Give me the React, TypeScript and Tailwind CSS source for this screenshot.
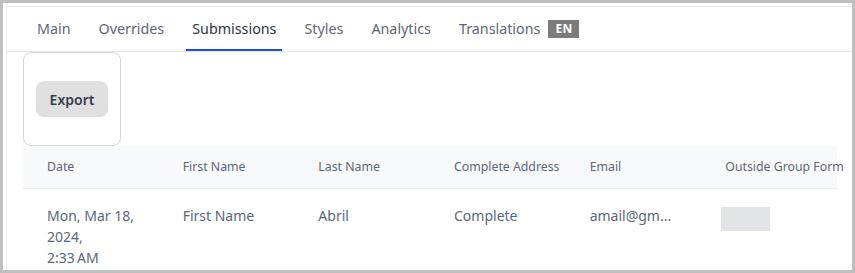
const tabs = ['Main', 'Overrides', 'Submissions', 'Styles', 'Analytics', 'Translations'];

const columns = ['Date', 'First Name', 'Last Name', 'Complete Address', 'Email', 'Outside Group Form'];

function Tab({ label, active }: { label: string; active: boolean }) {
  return (
    <div className="relative flex h-full items-center px-[14px]">
      <span className={active ? 'text-[14.3px] text-[#2c3445]' : 'text-[14.3px] text-[#5d6679]'}>{label}</span>
      {label === 'Translations' && (
        <span className="ml-2 bg-[#7b7b7b] px-[7px] py-px text-[12px] font-bold leading-4 tracking-wide text-white">
          EN
        </span>
      )}
      {active && <div className="absolute bottom-0 left-2 right-2 h-[2px] bg-[#1f4fd8]" />}
    </div>
  );
}

export default function App() {
  return (
    <div
      className="h-[273px] w-[855px] overflow-hidden bg-[#bfbfbf] pl-[3px] pr-[3px] pt-[3px]"
      style={{ fontFamily: '"Noto Sans", "Open Sans", sans-serif' }}
    >
      <div className="h-[267px] overflow-hidden bg-white pl-[3px] pt-[3px]">
        <div className="h-full border-l border-t border-[#ebebeb]">
          {/* Tabs */}
          <div className="flex h-[45px] items-stretch border-b border-[#e6e6e8] pl-4">
            {tabs.map((t) => (
              <Tab key={t} label={t} active={t === 'Submissions'} />
            ))}
          </div>

          <div className="pl-4">
            {/* Export card */}
            <div className="flex h-[94px] w-[98px] items-start rounded-lg border border-[#d6d6da] pl-[12px] pt-[28px]">
              <button className="h-9 w-[72px] rounded-lg bg-[#e0e0e0] text-[14px] font-semibold text-[#353d4b]">
                Export
              </button>
            </div>

            {/* Table */}
            <div className="w-[814px]">
              <div className="grid h-[43px] grid-cols-6 items-center border-b border-[#e8eaee] bg-[#f8f9fb]">
                {columns.map((c) => (
                  <div key={c} className="whitespace-nowrap pl-6 text-[12.3px] text-[#5d6679]">
                    {c}
                  </div>
                ))}
              </div>
              <div className="grid grid-cols-6 pt-[16px] text-[14px] leading-[21px] text-[#5d6679]">
                <div className="pl-6">
                  <span className="block">Mon, Mar 18,</span>
                  <span className="block">2024,</span>
                  <span className="block">2:33{'\u202f'}AM</span>
                </div>
                <div className="pl-6">First Name</div>
                <div className="pl-6">Abril</div>
                <div className="pl-6">Complete</div>
                <div className="pl-6">amail@gm...</div>
                <div className="pl-5 pt-[2px]">
                  <div className="h-6 w-[49px] bg-[#e2e3e7]" />
                </div>
              </div>
            </div>
          </div>
        </div>
      </div>
    </div>
  );
}
